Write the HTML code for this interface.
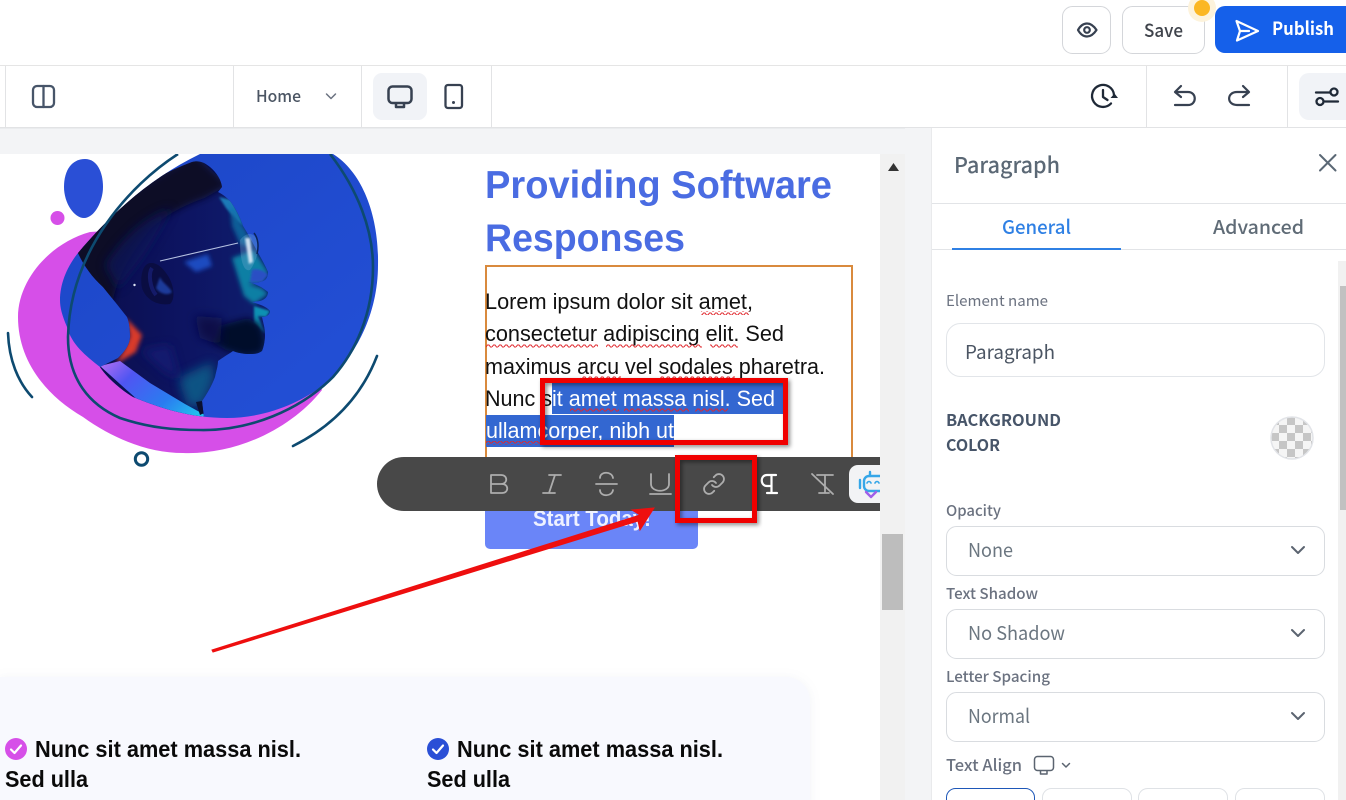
<!DOCTYPE html>
<html lang="en">
<head>
<meta charset="utf-8">
<title>Editor</title>
<style>
html,body{margin:0;padding:0;width:1346px;height:800px;overflow:hidden;background:#fff}
svg{display:block}
text{font-family:"Liberation Sans",sans-serif}
.ui{font-family:"Noto Sans CJK JP","Liberation Sans",sans-serif}
.ic{fill:none;stroke-linecap:round;stroke-linejoin:round}
</style>
</head>
<body>
<svg xmlns="http://www.w3.org/2000/svg" width="1346" height="800" viewBox="0 0 1346 800">
<defs>
<clipPath id="canvas"><rect x="0" y="154" width="880" height="646"/></clipPath>
<clipPath id="blueclip"><path d="M200 154L333 154C362 172 379 215 378 265C378 315 355 355 330 380C300 405 262 418 227 418C190 418 160 408 133 397C118 388 106 376 100 367C85 355 72 345 67 327C62 315 60 308 60 300C60 285 66 268 78 253C110 215 150 178 200 154Z"/></clipPath>
<clipPath id="headclip"><path d="M78 253C92 232 105 218 120 204C140 186 165 172 192 162C200 160 205 163 210 167C217 173 221 180 222 187L218 192C224 195 227 198 230 201C236 209 240 217 243 226C248 234 253 243 257 251C261 258 265 265 268 272C268 277 266 280 263 281C258 283 252 283 248 282C256 284 262 287 268 292C268 297 264 300 260 301L252 302C258 304 266 306 270 311C270 315 266 317 262 317C263 322 265 328 265 334C265 340 264 346 262 351C258 354 254 354 250 354C244 354 238 353 233 351C227 355 222 358 218 361C218 366 216 372 215 377C212 385 207 394 202 401L204 418H100L100 367L118 358C124 352 130 345 130 337C130 328 129 322 127 317C120 308 112 298 103 287C92 277 84 266 78 253Z"/></clipPath>
<linearGradient id="bluebg" x1="0" y1="0" x2="1" y2="1"><stop offset="0" stop-color="#1c46c6"/><stop offset="1" stop-color="#2450d8"/></linearGradient>
<linearGradient id="shirt" x1="0" y1="0" x2="1" y2=".5"><stop offset="0" stop-color="#b870f2"/><stop offset=".3" stop-color="#4f55f2"/><stop offset=".7" stop-color="#2a7cf0"/><stop offset="1" stop-color="#22c0ee"/></linearGradient>
<linearGradient id="face" x1="0" y1="0" x2="1" y2="0"><stop offset="0" stop-color="#0a0d48"/><stop offset=".55" stop-color="#0d1462"/><stop offset="1" stop-color="#0f2070"/></linearGradient>
<filter id="b1" x="-10%" y="-10%" width="120%" height="120%"><feGaussianBlur stdDeviation="1"/></filter>
<filter id="b2" x="-30%" y="-30%" width="160%" height="160%"><feGaussianBlur stdDeviation="2.200"/></filter>
<filter id="b3" x="-40%" y="-40%" width="180%" height="180%"><feGaussianBlur stdDeviation="3.500"/></filter>
<filter id="b5" x="-50%" y="-50%" width="200%" height="200%"><feGaussianBlur stdDeviation="5"/></filter>
<filter id="sh" x="-10%" y="-10%" width="120%" height="125%"><feDropShadow dx="2" dy="2" stdDeviation="2" flood-color="#000" flood-opacity=".45"/></filter>
<filter id="cardsh" x="-5%" y="-20%" width="110%" height="140%"><feDropShadow dx="0" dy="1" stdDeviation="5" flood-color="#8890b0" flood-opacity=".12"/></filter>
<pattern id="wav" width="6" height="4" patternUnits="userSpaceOnUse"><path d="M0 3L1.500 1L3 1L4.500 3L6 3" fill="none" stroke="#e0282e" stroke-width="1"/></pattern>
<pattern id="chk" x="1271" y="417" width="16" height="16" patternUnits="userSpaceOnUse"><rect width="16" height="16" fill="#f5f5f5"/><rect x="0" y="0" width="8" height="8" fill="#c6c6c6"/><rect x="8" y="8" width="8" height="8" fill="#c6c6c6"/></pattern>
<clipPath id="tbclip"><rect x="370" y="450" width="510" height="70"/></clipPath>
</defs>

<!-- top bar -->
<rect width="1346" height="800" fill="#fff"/>
<rect y="65" width="1346" height="1" fill="#e5e5e5"/>
<rect y="127" width="1346" height="27" fill="#f3f4f6"/>
<rect y="127" width="1346" height="1.500" fill="#e2e3e5"/>
<g fill="#e2e3e5">
<rect x="5" y="66" width="1" height="61"/><rect x="233" y="66" width="1" height="61"/><rect x="361" y="66" width="1" height="61"/><rect x="491" y="66" width="1" height="61"/><rect x="1146" y="66" width="1" height="61"/><rect x="1287" y="66" width="1" height="61"/>
</g>
<g class="ic" stroke="#475569" stroke-width="2.300"><rect x="33" y="86" width="21" height="21" rx="4"/><path d="M43.500 86V107"/></g>
<text class="ui" x="256" y="102" font-size="16" font-weight="500" fill="#4b5563" textLength="45" lengthAdjust="spacingAndGlyphs">Home</text>
<path class="ic" d="M326.500 94L331 98.500L335.500 94" stroke="#6b7280" stroke-width="1.500"/>
<rect x="373" y="73" width="54" height="47" rx="9" fill="#f1f3f7"/>
<g class="ic" stroke="#374151" stroke-width="2.500"><rect x="388.500" y="86.500" width="23" height="16.500" rx="4"/><path d="M396 103.500V107H404V103.500"/></g>
<g class="ic" stroke="#374151" stroke-width="2.300"><rect x="445.500" y="85" width="16.500" height="23" rx="2.500"/></g>
<circle cx="453.500" cy="102.500" r="1.500" fill="#374151"/>

<rect x="1062.500" y="6.500" width="48" height="47" rx="10" fill="#fff" stroke="#d4d6da"/>
<g class="ic" stroke="#374151" stroke-width="2.200"><path d="M1078 30C1080.500 25.500 1083.500 23.500 1087 23.500C1090.500 23.500 1093.500 25.500 1096.500 30C1093.500 34.500 1090.500 36.500 1087 36.500C1083.500 36.500 1080.500 34.500 1078 30Z"/><circle cx="1087" cy="30" r="2.800"/></g>
<rect x="1122.500" y="6.500" width="82" height="47" rx="10" fill="#fff" stroke="#d4d6da"/>
<text class="ui" x="1144" y="37" font-size="18" font-weight="500" fill="#3f434b" textLength="39" lengthAdjust="spacingAndGlyphs">Save</text>
<circle cx="1202" cy="8" r="14" fill="#fdf3dc"/>
<circle cx="1202" cy="8" r="8" fill="#fbb724"/>
<path d="M1225 6H1346V53H1225A10 10 0 0 1 1215 43V16A10 10 0 0 1 1225 6Z" fill="#1560ea"/>
<g class="ic" stroke="#fff" stroke-width="2.200"><path d="M1236.500 21L1258 31L1237 40.500L1240 31L1236.500 21ZM1240 31H1249"/></g>
<text class="ui" x="1272" y="35" font-size="18" font-weight="700" fill="#fff" textLength="62" lengthAdjust="spacingAndGlyphs">Publish</text>

<g class="ic" stroke="#1f2937" stroke-width="2.300">
<path d="M1111 103.500A11 11 0 1 1 1114 95"/><path d="M1103 90V97L1107.500 100"/>
</g>
<path d="M1110.500 98L1114.500 93.500L1118 98Z" fill="#1f2937"/>
<g class="ic" stroke="#374151" stroke-width="2.200">
<path d="M1181 86L1175 92L1181 97"/><path d="M1175.500 92H1188C1197 92 1197 105 1188 105H1175"/>
<path d="M1243 86L1249 92L1243 97"/><path d="M1248.500 92H1237C1226.500 92 1226.500 105 1237 105H1249"/>
</g>
<path d="M1309 73H1346V120H1309A10 10 0 0 1 1299 110V83A10 10 0 0 1 1309 73Z" fill="#f1f3f7"/>
<g class="ic" stroke="#1f2937" stroke-width="2.300"><path d="M1316 92.500H1330"/><circle cx="1334" cy="92" r="3.500"/><path d="M1325 101.500H1338"/><circle cx="1320" cy="101.500" r="3.500"/></g>

<!-- page canvas -->
<rect x="0" y="154" width="880" height="646" fill="#fff"/>
<rect x="880" y="154" width="25" height="646" fill="#f1f1f1"/>
<path d="M888 171L893.500 163L899 171Z" fill="#333"/>
<rect x="882" y="534" width="21" height="76" fill="#bdbdbd"/>

<g clip-path="url(#canvas)">
<!-- hero art -->
<path d="M64 187C64 170 72 159 85 159C97 159 103 172 103 187C103 202 94 218 84 218C74 218 64 203 64 187Z" fill="#2a4fd6"/>
<circle cx="57.500" cy="218" r="7" fill="#d64fe8"/>
<path d="M90 232C50 243 18 280 18 317C18 360 45 395 83 417C115 440 150 453 183 453C235 455 290 430 322 390L290 300L120 230Z" fill="#d64fe8"/>
<g clip-path="url(#blueclip)">
<rect x="50" y="150" width="340" height="280" fill="url(#bluebg)"/>
<!-- figure -->
<g clip-path="url(#headclip)">
<rect x="70" y="150" width="210" height="275" fill="url(#face)"/>
<!-- hair -->
<path d="M70 255L120 198L195 155L228 185L205 198C185 205 165 215 150 230C130 255 118 275 112 305L85 285Z" fill="#070828" filter="url(#b3)"/>
<path d="M105 265C120 240 145 215 172 208C162 228 150 248 140 262L118 290Z" fill="#0e1558" filter="url(#b5)" opacity=".8"/>
<!-- red glow -->
<path d="M126 318L142 335L136 352L116 364L124 350L130 336Z" fill="#d83a2a" filter="url(#b2)"/>
<!-- teal lights -->
<path d="M219 197L232 200L244 226L238 222L226 208Z" fill="#1a7ab8" filter="url(#b1)"/>
<path d="M230 206L246 230L252 248L240 244L232 226Z" fill="#0d6aa0" filter="url(#b2)" opacity=".85"/>
<path d="M232 258L254 250L268 272L262 282L248 284L262 288L268 294L254 304L244 296Z" fill="#0a7fa4" filter="url(#b2)"/>
<path d="M254 306L270 311L266 317L258 316L265 334L254 322Z" fill="#0c90b2" filter="url(#b1)"/>
<path d="M252 270C256 268 264 270 268 275L262 282L250 282Z" fill="#2a50c4" filter="url(#b1)"/>
<!-- cheek patch -->
<path d="M184 262L208 254L212 266L196 272Z" fill="#1c4cc0" filter="url(#b2)"/>
<!-- beard -->
<path d="M218 326L248 318L260 325L265 340L262 353L245 356L226 350L212 342Z" fill="#060a2c" filter="url(#b3)"/>
<path d="M195 316L222 318L220 345L200 338Z" fill="#0a0f46" filter="url(#b5)"/>
<!-- neck -->
<path d="M178 378L212 362L214 380L204 404L188 408Z" fill="#0a5f8a" filter="url(#b5)" opacity=".85"/>
<path d="M140 350L170 345L180 380L165 372Z" fill="#151c74" filter="url(#b5)" opacity=".8"/>
<!-- shirt -->
<path d="M100 366L120 361L150 383L185 404L205 415L222 420L160 420Z" fill="url(#shirt)"/>
<path d="M196 402L202 401L206 412L200 415Z" fill="#0a1030"/>
<!-- ear -->
<path d="M152 263C142 262 140 278 142 288C146 300 158 306 170 304C176 299 174 283 166 273C161 266 156 263 152 263Z" fill="#0a0d42"/>
<path d="M152 268C148 274 150 288 156 295" fill="none" stroke="#141a68" stroke-width="4"/>
<path d="M160 277C162 283 168 285 172 292C168 296 160 294 156 288Z" fill="#1f3a9a" filter="url(#b1)"/>
</g>
<!-- glasses -->
<path d="M160 261L238 243" stroke="#b6c2e2" stroke-width="1.100" fill="none"/>
<path d="M240 240C246 232 254 232 257 240C260 250 256 262 250 270C244 272 240 262 240 240Z" fill="#6aa8d0" opacity=".35"/>
<path d="M245 238L250 238L253 262L249 264Z" fill="#eaf4ff" opacity=".85" filter="url(#b1)"/>
<path d="M254 233C258 238 259 246 257 254" stroke="#0b2458" stroke-width="1.500" fill="none"/>
<circle cx="134.500" cy="285" r="1.200" fill="#dfe6f5"/>
</g>
<!-- ring lines -->
<path d="M178 154C130 185 70 250 68 337C68 380 90 405 120 418C150 428 175 430 200 430C250 431 300 410 333 377C355 352 373 315 373 267C373 230 358 190 330 154" fill="none" stroke="#0d4a70" stroke-width="2.600"/>
<path d="M8 333C9 360 18 382 32 397" fill="none" stroke="#0d4a70" stroke-width="2.600" stroke-linecap="round"/>
<path d="M377 356C362 395 335 425 293 446" fill="none" stroke="#0d4a70" stroke-width="2.600" stroke-linecap="round"/>
<circle cx="141.500" cy="459" r="6.200" fill="none" stroke="#0d4a70" stroke-width="3"/>

<!-- heading -->
<text x="485" y="198" font-size="39" font-weight="700" fill="#4a6ce2" textLength="347" lengthAdjust="spacingAndGlyphs">Providing Software</text>
<text x="485" y="251" font-size="39" font-weight="700" fill="#4a6ce2" textLength="200" lengthAdjust="spacingAndGlyphs">Responses</text>

<!-- paragraph -->
<rect x="486" y="266" width="366" height="224" fill="none" stroke="#d98a3d" stroke-width="2"/>
<rect x="552" y="382" width="231" height="32" fill="#3367d1"/>
<rect x="486" y="415" width="188" height="32" fill="#3367d1"/>
<g font-size="22" fill="#111">
<text x="485" y="309" textLength="268" lengthAdjust="spacingAndGlyphs">Lorem ipsum dolor sit amet,</text>
<text x="485" y="341" textLength="299" lengthAdjust="spacingAndGlyphs">consectetur adipiscing elit. Sed</text>
<text x="485" y="374" textLength="340" lengthAdjust="spacingAndGlyphs">maximus arcu vel sodales pharetra.</text>
<text x="485" y="406" textLength="67" lengthAdjust="spacingAndGlyphs">Nunc s</text>
<text x="552" y="406" fill="#fff" textLength="223" lengthAdjust="spacingAndGlyphs">it amet massa nisl. Sed</text>
<text x="486" y="438" fill="#fff" textLength="188" lengthAdjust="spacingAndGlyphs">ullamcorper, nibh ut</text>
</g>
<g fill="url(#wav)">
<rect x="701" y="311" width="48" height="4"/>
<rect x="486" y="344" width="112" height="4"/><rect x="606" y="344" width="96" height="4"/><rect x="710" y="344" width="28" height="4"/>
<rect x="580" y="376" width="41" height="4"/><rect x="660" y="376" width="75" height="4"/>
<rect x="570" y="408" width="49" height="4"/><rect x="624" y="408" width="65" height="4"/><rect x="695" y="408" width="33" height="4"/>
<rect x="486" y="441" width="60" height="4"/>
</g>

<!-- CTA -->
<rect x="485" y="490" width="213" height="59" rx="5" fill="#6a85f8"/>
<text x="533" y="526" font-size="22" font-weight="700" fill="#eef1ff" textLength="118" lengthAdjust="spacingAndGlyphs">Start Today!</text>

<!-- floating toolbar -->
<g clip-path="url(#tbclip)">
<rect x="377" y="457" width="560" height="54" rx="27" fill="#484848"/>
<g class="ic" stroke="#adadad" stroke-width="1.800">
<path d="M491 475H501C508 475 508 484 501 484H491ZM491 484H502C509 484 509 493 502 493H491Z"/>
<path d="M549 475H561M543 493H555M555 475L549 493"/>
<path d="M596 484H617M613 478C612 471 600 471 600 478M600 490C600 497 612 497 613 490"/>
<path d="M651 474V484C651 493 669 493 669 484V474M650 494H671"/>
<g transform="translate(702 472)"><path d="M10 13a5 5 0 0 0 7.540.540l3-3a5 5 0 0 0-7.070-7.070l-1.720 1.710"/><path d="M14 11a5 5 0 0 0-7.540-.540l-3 3a5 5 0 0 0 7.070 7.070l1.710-1.710"/></g>
</g>
<g class="ic" stroke="#fff" stroke-width="2.200"><path d="M776 475H767C760 475 760 486 767 486H771.500M771.500 475V493M767 493H777"/></g>
<g class="ic" stroke="#adadad" stroke-width="1.800"><path d="M817 475H833M825 475V493M819 493H829M812 474L833 494"/></g>
<rect x="849" y="465" width="50" height="38" rx="9" fill="#f2f3f5"/>
<g class="ic" stroke-width="2.400"><rect x="864" y="476" width="22" height="15" rx="5" stroke="#35a6e8"/><path d="M860 480V488" stroke="#35a6e8"/><path d="M870 472V476" stroke="#35a6e8"/><path d="M866 492L871 497L876 492" stroke="#a060e8"/><path d="M867 483C868 481 870 481 871 483M875 483C876 481 878 481 879 483" stroke="#35a6e8" stroke-width="1.600"/></g>
</g>

<!-- features card -->
<path d="M0 677H786A24 24 0 0 1 810 701V810H0Z" fill="#f8f9fe" filter="url(#cardsh)"/>
<circle cx="16" cy="749" r="11" fill="#d64fe8"/>
<path class="ic" d="M11 749.500L14.500 753L21 745.500" stroke="#fff" stroke-width="2.200"/>
<circle cx="438" cy="749" r="11" fill="#2a4fd6"/>
<path class="ic" d="M433 749.500L436.500 753L443 745.500" stroke="#fff" stroke-width="2.200"/>
<g font-size="23" font-weight="700" fill="#0a0a0a">
<text x="35" y="757" textLength="266" lengthAdjust="spacingAndGlyphs">Nunc sit amet massa nisl.</text>
<text x="5" y="787" textLength="83" lengthAdjust="spacingAndGlyphs">Sed ulla</text>
<text x="457" y="757" textLength="266" lengthAdjust="spacingAndGlyphs">Nunc sit amet massa nisl.</text>
<text x="427" y="787" textLength="83" lengthAdjust="spacingAndGlyphs">Sed ulla</text>
</g>
</g>

<!-- annotations -->
<rect x="542.500" y="380.500" width="243" height="62" fill="none" stroke="#f00000" stroke-width="5" filter="url(#sh)"/>
<rect x="677.500" y="457.500" width="77" height="63" fill="none" stroke="#f00000" stroke-width="5" filter="url(#sh)"/>
<path d="M212 650L640 515L632 510L654 508L640 530L638 521L213 652Z" fill="#ee0f0f" stroke="#ee0f0f" stroke-width="1"/>

<!-- right panel -->
<rect x="905" y="128" width="27" height="672" fill="#f3f4f6"/>
<rect x="932" y="128" width="414" height="672" fill="#fff"/>
<rect x="931" y="128" width="1" height="672" fill="#e9eaec"/>
<text class="ui" x="954" y="173" font-size="22" font-weight="500" fill="#5b6875" textLength="106" lengthAdjust="spacingAndGlyphs">Paragraph</text>
<path class="ic" d="M1320 155L1335.500 170.500M1335.500 155L1320 170.500" stroke="#5b6875" stroke-width="2"/>
<rect x="932" y="203" width="414" height="1" fill="#e2e4e7"/>
<rect x="932" y="249" width="414" height="1" fill="#e2e4e7"/>
<text class="ui" x="1002" y="234" font-size="19" font-weight="500" fill="#2f80e4" textLength="69" lengthAdjust="spacingAndGlyphs">General</text>
<text class="ui" x="1213" y="234" font-size="19" font-weight="500" fill="#5f6b76" textLength="91" lengthAdjust="spacingAndGlyphs">Advanced</text>
<rect x="952" y="248" width="169" height="2" fill="#2f80e4"/>
<rect x="1338" y="261" width="8" height="539" fill="#f1f1f1"/>
<rect x="1340" y="286" width="6" height="224" fill="#c1c1c1"/>

<text class="ui" x="946" y="306" font-size="15" fill="#6b7280" textLength="102" lengthAdjust="spacingAndGlyphs">Element name</text>
<rect x="946.500" y="323.500" width="378" height="53" rx="14" fill="#fff" stroke="#e2e5e9"/>
<text class="ui" x="965" y="359" font-size="19" fill="#4b5563" textLength="90" lengthAdjust="spacingAndGlyphs">Paragraph</text>
<text class="ui" x="946" y="426" font-size="16" font-weight="700" fill="#475569" textLength="115" lengthAdjust="spacingAndGlyphs">BACKGROUND</text>
<text class="ui" x="946" y="451" font-size="16" font-weight="700" fill="#475569" textLength="54" lengthAdjust="spacingAndGlyphs">COLOR</text>
<circle cx="1292" cy="438" r="21" fill="url(#chk)" stroke="#e2e4e8" stroke-width="1.500"/>

<text class="ui" x="946" y="516" font-size="15" font-weight="500" fill="#6b7280" textLength="55" lengthAdjust="spacingAndGlyphs">Opacity</text>
<rect x="946.500" y="526.500" width="378" height="49" rx="10" fill="#fff" stroke="#d9dce0"/>
<text class="ui" x="968" y="557" font-size="19" fill="#6b7680" textLength="45" lengthAdjust="spacingAndGlyphs">None</text>
<path class="ic" d="M1292 547L1298 553L1304 547" stroke="#5b6470" stroke-width="2"/>

<text class="ui" x="946" y="599" font-size="15" font-weight="500" fill="#6b7280" textLength="92" lengthAdjust="spacingAndGlyphs">Text Shadow</text>
<rect x="946.500" y="609.500" width="378" height="49" rx="10" fill="#fff" stroke="#d9dce0"/>
<text class="ui" x="968" y="640" font-size="19" fill="#6b7680" textLength="97" lengthAdjust="spacingAndGlyphs">No Shadow</text>
<path class="ic" d="M1292 630L1298 636L1304 630" stroke="#5b6470" stroke-width="2"/>

<text class="ui" x="946" y="682" font-size="15" font-weight="500" fill="#6b7280" textLength="104" lengthAdjust="spacingAndGlyphs">Letter Spacing</text>
<rect x="946.500" y="692.500" width="378" height="49" rx="10" fill="#fff" stroke="#d9dce0"/>
<text class="ui" x="968" y="723" font-size="19" fill="#6b7680" textLength="62" lengthAdjust="spacingAndGlyphs">Normal</text>
<path class="ic" d="M1292 713L1298 719L1304 713" stroke="#5b6470" stroke-width="2"/>

<text class="ui" x="946" y="771" font-size="16" font-weight="500" fill="#6b7280" textLength="76" lengthAdjust="spacingAndGlyphs">Text Align</text>
<g class="ic" stroke="#5b6470" stroke-width="1.500"><rect x="1034.500" y="756.500" width="19" height="14" rx="3"/><path d="M1040.500 771V774H1047V771"/><path d="M1062.500 763.500L1066 767L1069.500 763.500"/></g>
<rect x="946.500" y="788.500" width="88" height="30" rx="9" fill="#fff" stroke="#1e57b8"/>
<rect x="1042.500" y="788.500" width="89" height="30" rx="9" fill="#fff" stroke="#dfe2e6"/>
<rect x="1138.500" y="788.500" width="89" height="30" rx="9" fill="#fff" stroke="#dfe2e6"/>
<rect x="1235.500" y="788.500" width="89" height="30" rx="9" fill="#fff" stroke="#dfe2e6"/>
</svg>
</body>
</html>
